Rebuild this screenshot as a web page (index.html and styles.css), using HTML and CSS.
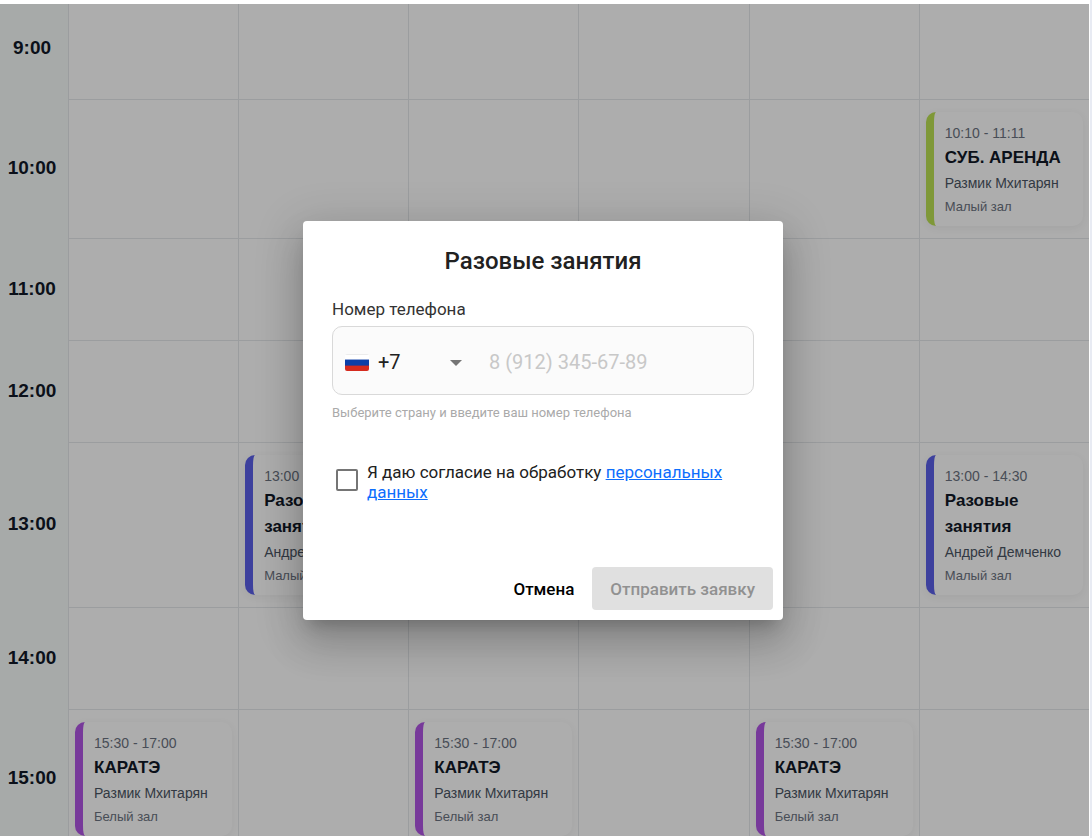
FILE: index.html
```html
<!DOCTYPE html>
<html lang="ru">
<head>
    <meta charset="UTF-8">
    <meta name="viewport" content="width=device-width, initial-scale=1.0">
    <title>Расписание</title>
    <link rel="stylesheet" href="styles.css">
</head>
<body>
    <div class="page">
        <table class="schedule">
            <tbody>
                <tr>
                    <th scope="row">9:00</th>
                    <td></td><td></td><td></td><td></td><td></td><td></td>
                </tr>
                <tr>
                    <th scope="row">10:00</th>
                    <td></td><td></td><td></td><td></td><td></td>
                    <td>
                        <div class="card card-green">
                            <div class="card-time">10:10 - 11:11</div>
                            <div class="card-title">СУБ. АРЕНДА</div>
                            <div class="card-trainer">Размик Мхитарян</div>
                            <div class="card-room">Малый зал</div>
                        </div>
                    </td>
                </tr>
                <tr>
                    <th scope="row">11:00</th>
                    <td></td><td></td><td></td><td></td><td></td><td></td>
                </tr>
                <tr>
                    <th scope="row">12:00</th>
                    <td></td><td></td><td></td><td></td><td></td><td></td>
                </tr>
                <tr>
                    <th scope="row">13:00</th>
                    <td></td>
                    <td>
                        <div class="card card-blue">
                            <div class="card-time">13:00 - 14:30</div>
                            <div class="card-title">Разовые занятия</div>
                            <div class="card-trainer">Андрей Демченко</div>
                            <div class="card-room">Малый зал</div>
                        </div>
                    </td>
                    <td></td><td></td><td></td>
                    <td>
                        <div class="card card-blue">
                            <div class="card-time">13:00 - 14:30</div>
                            <div class="card-title">Разовые занятия</div>
                            <div class="card-trainer">Андрей Демченко</div>
                            <div class="card-room">Малый зал</div>
                        </div>
                    </td>
                </tr>
                <tr>
                    <th scope="row">14:00</th>
                    <td></td><td></td><td></td><td></td><td></td><td></td>
                </tr>
                <tr>
                    <th scope="row">15:00</th>
                    <td>
                        <div class="card card-purple">
                            <div class="card-time">15:30 - 17:00</div>
                            <div class="card-title">КАРАТЭ</div>
                            <div class="card-trainer">Размик Мхитарян</div>
                            <div class="card-room">Белый зал</div>
                        </div>
                    </td>
                    <td></td>
                    <td>
                        <div class="card card-purple">
                            <div class="card-time">15:30 - 17:00</div>
                            <div class="card-title">КАРАТЭ</div>
                            <div class="card-trainer">Размик Мхитарян</div>
                            <div class="card-room">Белый зал</div>
                        </div>
                    </td>
                    <td></td>
                    <td>
                        <div class="card card-purple">
                            <div class="card-time">15:30 - 17:00</div>
                            <div class="card-title">КАРАТЭ</div>
                            <div class="card-trainer">Размик Мхитарян</div>
                            <div class="card-room">Белый зал</div>
                        </div>
                    </td>
                    <td></td>
                </tr>
            </tbody>
        </table>

        <div class="overlay">
            <form class="dialog" role="dialog" aria-modal="true" aria-labelledby="dialogTitle">
                <h2 class="dialog-title" id="dialogTitle">Разовые занятия</h2>

                <label class="field-label" for="phone">Номер телефона</label>
                <div class="phone-field">
                    <svg class="flag" viewBox="0 0 24 18" aria-hidden="true">
                        <clipPath id="flagClip"><rect y="1" width="24" height="17" rx="2"/></clipPath>
                        <g clip-path="url(#flagClip)">
                            <rect width="24" height="18" fill="#fff"/>
                            <rect y="1" width="24" height="1" fill="#ececec"/>
                            <rect y="6" width="24" height="1" fill="#8fa6d8"/>
                            <rect y="7" width="24" height="6" fill="#0c3fa8"/>
                            <rect y="12" width="24" height="1" fill="#5a3570"/>
                            <rect y="13" width="24" height="5" fill="#d52b1e"/>
                        </g>
                    </svg>
                    <select class="country" aria-label="Код страны">
                        <option>+7</option>
                    </select>
                    <svg class="arrow" viewBox="0 0 12 6" aria-hidden="true"><path d="M0 0h12L6 6z" fill="#757575"/></svg>
                    <input class="phone" id="phone" type="tel" placeholder="8 (912) 345-67-89">
                </div>
                <div class="hint">Выберите страну и введите ваш номер телефона</div>

                <div class="consent">
                    <input class="checkbox" id="consent" type="checkbox">
                    <label for="consent">Я даю согласие на обработку <a href="#">персональных данных</a></label>
                </div>

                <div class="actions">
                    <button class="btn" type="button">Отмена</button>
                    <button class="btn btn-submit" type="submit" disabled>Отправить заявку</button>
                </div>
            </form>
        </div>
    </div>
</body>
</html>
```
FILE: styles.css
```css
* {
    box-sizing: border-box;
}
body {
    margin: 0;
    padding: 4px 1px 2px 0;
    height: 100vh;
    border-right: 2px solid #e8ebf3;
    background-color: #fff;
    font-family: "Liberation Sans", Arial, sans-serif;
}
.page {
    position: relative;
    height: 100%;
    overflow: hidden;
    background-color: #fff;
}

/* schedule */
.schedule {
    width: 100%;
    margin-top: -6px;
    table-layout: fixed;
    border-collapse: separate;
    border-spacing: 0;
}
.schedule th {
    width: 68px;
    padding: 0 4px 3px 0;
    background-color: #f7fbfa;
    color: #111827;
    font-size: 19px;
    font-weight: bold;
    text-align: center;
    vertical-align: middle;
}
.schedule td {
    height: 102px;
    padding: 12px 6px;
    border-left: 1px solid #e5e7eb;
    border-bottom: 1px solid #e5e7eb;
    vertical-align: top;
}
.card {
    padding: 9px 8px 8px 11px;
    border-left: 8px solid;
    border-radius: 10px;
    background-color: #fff;
    box-shadow: 0 2px 8px rgba(0, 0, 0, 0.06);
}
.card-green {
    border-left-color: #bbe053;
}
.card-blue {
    border-left-color: #5a5fe8;
}
.card-purple {
    border-left-color: #b054e4;
}
.card-time {
    color: #6b7280;
    font-size: 14px;
    line-height: 24px;
}
.card-title {
    color: #111827;
    font-size: 17px;
    font-weight: bold;
    line-height: 26px;
}
.card-trainer {
    color: #4b5563;
    font-size: 14px;
    line-height: 24px;
}
.card-room {
    color: #6b7280;
    font-size: 13px;
    line-height: 23px;
}

/* dialog */
.overlay {
    position: absolute;
    inset: 0;
    display: flex;
    align-items: center;
    justify-content: center;
    padding-right: 3px;
    background-color: rgba(0, 0, 0, 0.32);
}
.dialog {
    width: 100%;
    max-width: 480px;
    padding: 24px 10px 10px;
    border-radius: 4px;
    background-color: #fff;
    box-shadow: 0 11px 15px -7px rgba(0, 0, 0, 0.2), 0 24px 38px 3px rgba(0, 0, 0, 0.14), 0 9px 46px 8px rgba(0, 0, 0, 0.12);
    color: #212121;
    font-family: Roboto, sans-serif;
}
.dialog-title {
    margin: 0 0 18px;
    font-size: 24px;
    font-weight: 500;
    line-height: 32px;
    text-align: center;
}
.field-label {
    display: block;
    margin: 0 19px 3px;
    color: #333;
    font-size: 17px;
    line-height: 28px;
}
.phone-field {
    display: flex;
    align-items: center;
    height: 69px;
    margin: 0 19px;
    padding: 4px 12px 0;
    border: 1px solid #d9d9d9;
    border-radius: 10px;
    background-color: #fbfbfb;
}
.flag {
    width: 24px;
    height: 18px;
}
.country {
    width: 82px;
    margin-right: -12px;
    padding: 0 0 0 9px;
    border: 0;
    appearance: none;
    background: none;
    color: #212121;
    font: 20px Roboto, sans-serif;
}
.arrow {
    width: 12px;
    height: 6px;
    margin: 2px 27px 0 11px;
    pointer-events: none;
}
.phone {
    flex: 1;
    min-width: 0;
    padding: 0;
    border: 0;
    outline: 0;
    background: none;
    font: 20px Roboto, sans-serif;
}
.phone::placeholder {
    color: #c8c8c8;
}
.hint {
    margin: 8px 19px 0;
    color: #aaa;
    font-size: 13px;
    line-height: 20px;
}
.consent {
    display: flex;
    align-items: flex-start;
    gap: 9px;
    margin: 39px 19px 65px 23px;
    font-size: 17px;
    line-height: 20px;
}
.consent a {
    color: #0d6efd;
}
.checkbox {
    flex: none;
    width: 22px;
    height: 22px;
    margin: 7px 0 0;
    border: 2px solid #757575;
    border-radius: 2px;
    appearance: none;
    background-color: #fff;
}
.checkbox:checked {
    background-color: #0d6efd;
}
.actions {
    display: flex;
    justify-content: flex-end;
}
.btn {
    height: 43px;
    padding: 2px 18px 0;
    border: 0;
    border-radius: 4px;
    background: none;
    color: #000;
    font: 500 17px Roboto, sans-serif;
}
.btn-submit {
    background-color: #e0e0e0;
    color: #919191;
}
```
